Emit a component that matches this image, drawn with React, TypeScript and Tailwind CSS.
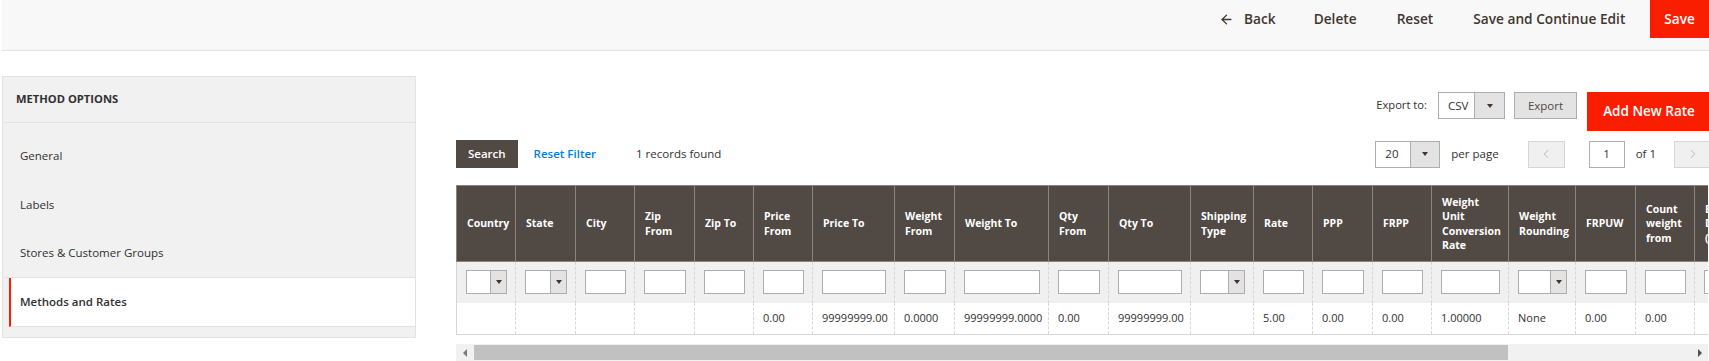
import { ArrowLeft, ChevronLeft, ChevronRight } from "lucide-react";

type Column = {
  label: string[];
  w: number;
  filter?: "select" | "text";
  value?: string;
};

const columns: Column[] = [
  { label: ["Country"], w: 59, filter: "select" },
  { label: ["State"], w: 60, filter: "select" },
  { label: ["City"], w: 59 },
  { label: ["Zip", "From"], w: 60 },
  { label: ["Zip To"], w: 59 },
  { label: ["Price", "From"], w: 59, value: "0.00" },
  { label: ["Price To"], w: 82, value: "99999999.00" },
  { label: ["Weight", "From"], w: 60, value: "0.0000" },
  { label: ["Weight To"], w: 94, value: "99999999.0000" },
  { label: ["Qty", "From"], w: 60, value: "0.00" },
  { label: ["Qty To"], w: 82, value: "99999999.00" },
  { label: ["Shipping", "Type"], w: 63, filter: "select" },
  { label: ["Rate"], w: 59, value: "5.00" },
  { label: ["PPP"], w: 60, value: "0.00" },
  { label: ["FRPP"], w: 59, value: "0.00" },
  { label: ["Weight", "Unit", "Conversion", "Rate"], w: 77, value: "1.00000" },
  { label: ["Weight", "Rounding"], w: 67, filter: "select", value: "None" },
  { label: ["FRPUW"], w: 60, value: "0.00" },
  { label: ["Count", "weight", "from"], w: 59, value: "0.00" },
  { label: ["Estimated", "Delivery", "(days)"], w: 80 },
];

const Caret = () => (
  <span className="w-0 h-0 border-x-[3.5px] border-x-transparent border-t-[4px] border-t-[#41362f]" />
);

const FakeSelect = ({ label = "", arrowW = "w-[16px]", className = "" }: { label?: string; arrowW?: string; className?: string }) => (
  <div className={`flex border border-[#adadad] bg-white ${className}`}>
    <div className="flex-1 flex items-center pl-[9px] text-[11.5px] text-[#303030]">{label}</div>
    <div className={`${arrowW} flex items-center justify-center bg-[#e3e3e3] border-l border-[#adadad]`}>
      <Caret />
    </div>
  </div>
);

const sideItems = ["General", "Labels", "Stores & Customer Groups"];

export default function App() {
  const tableWidth = columns.reduce((s, c) => s + c.w, 0);

  return (
    <div className="w-[1709px] h-[361px] overflow-hidden bg-white font-['Open_Sans',sans-serif] text-[#303030]">
      {/* page actions */}
      <div className="ml-[2px] h-[51px] bg-[#f8f8f8] border-b border-[#e3e3e3] flex justify-end items-start">
        <div className="flex items-center h-[38px] text-[13.7px] font-semibold text-[#41362f]">
          <ArrowLeft size={15} strokeWidth={2.2} className="mr-[10px]" />
          <span className="mr-[38px]">Back</span>
          <span className="mr-[40px]">Delete</span>
          <span className="mr-[40px]">Reset</span>
          <span className="mr-[25px]">Save and Continue Edit</span>
          <span className="h-[38px] flex items-center px-[14px] bg-[#fa1e00] text-white">Save</span>
        </div>
      </div>

      <div className="flex">
        {/* sidebar */}
        <aside className="ml-[2px] mt-[25px] w-[414px] shrink-0 self-start bg-[#f1f1f1] border border-[#e3e3e3] pb-[10px]">
          <div className="h-[46px] flex items-center pl-[13px] border-b border-[#e3e3e3] text-[11.2px] font-bold text-[#303030]">
            METHOD OPTIONS
          </div>
          <div className="pt-[8px]">
            {sideItems.map((item, i) => (
              <div
                key={item}
                className={`h-[49px] flex items-center pl-[17px] text-[11.5px] text-[#303030] ${
                  i === sideItems.length - 1 ? "border-b border-[#e3e3e3]" : ""
                }`}
              >
                {item}
              </div>
            ))}
            <div className="ml-[6px] h-[49px] flex items-center pl-[9px] bg-white border-l-2 border-l-[#fa1e00] border-b border-b-[#e3e3e3] text-[11.5px] font-semibold text-[#303030]">
              Methods and Rates
            </div>
          </div>
        </aside>

        {/* grid */}
        <main className="ml-[40px] mt-[41px] w-[1255px] shrink-0">
          <div className="flex justify-end items-start">
            <span className="h-[27px] flex items-center mr-[11px] text-[11.2px] text-[#303030]">Export to:</span>
            <FakeSelect label="CSV" arrowW="w-[30px]" className="w-[67px] h-[27px] mr-[9px]" />
            <button className="w-[63px] h-[27px] bg-[#e3e3e3] border border-[#adadad] text-[11.5px] text-[#514943] mr-[10px]">
              Export
            </button>
            <button className="w-[124px] h-[39px] bg-[#fa1e00] text-white text-[13.5px] font-semibold">Add New Rate</button>
          </div>

          <div className="mt-[9px] h-[28px] flex justify-between items-center">
            <div className="flex items-center">
              <button className="h-[28px] px-[12px] bg-[#514943] text-white text-[11.5px] font-semibold">Search</button>
              <span className="ml-[16px] text-[11.5px] font-semibold text-[#007bdb]">Reset Filter</span>
              <span className="ml-[40px] text-[11.5px] text-[#303030]">1 records found</span>
            </div>
            <div className="flex items-center">
              <FakeSelect label="20" arrowW="w-[29px]" className="w-[65px] h-[27px]" />
              <span className="ml-[11px] text-[11.5px] text-[#303030]">per page</span>
              <div className="ml-[29px] w-[37px] h-[27px] flex items-center justify-center bg-[#f0f0f0] border border-[#d6d6d6]">
                <ChevronLeft size={14} strokeWidth={1.5} className="text-[#adadad]" />
              </div>
              <div className="ml-[24px] w-[36px] h-[27px] flex items-center justify-center bg-white border border-[#adadad] text-[11.5px]">
                1
              </div>
              <span className="ml-[11px] text-[11.5px] text-[#303030]">of 1</span>
              <div className="ml-[18px] w-[37px] h-[27px] flex items-center justify-center bg-[#f0f0f0] border border-[#d6d6d6]">
                <ChevronRight size={14} strokeWidth={1.5} className="text-[#adadad]" />
              </div>
            </div>
          </div>

          <div className="mt-[17px] w-[1252px] overflow-hidden">
            <table className="table-fixed border-collapse" style={{ width: tableWidth }}>
              <colgroup>
                {columns.map((c, i) => (
                  <col key={i} style={{ width: c.w }} />
                ))}
              </colgroup>
              <thead>
                <tr className="h-[76px] bg-[#514943]">
                  {columns.map((c, i) => (
                    <th
                      key={i}
                      className="border border-[#8a837f] pl-[10px] text-left align-middle text-[10.5px] font-bold leading-[14.5px] text-white whitespace-nowrap"
                    >
                      {c.label.map((l, j) => (
                        <div key={j}>{l}</div>
                      ))}
                    </th>
                  ))}
                </tr>
              </thead>
              <tbody>
                <tr className="h-[41px] bg-[#f0f0f0]">
                  {columns.map((c, i) => (
                    <td
                      key={i}
                      className={`pl-[9px] pr-[8px] border-[#d6d6d6] ${
                        i === 0 ? "border-l border-solid" : "border-l border-dashed"
                      }`}
                    >
                      {c.filter === "select" ? (
                        <FakeSelect className="w-full h-[24px]" />
                      ) : (
                        <div className="w-full h-[24px] bg-white border border-[#adadad]" />
                      )}
                    </td>
                  ))}
                </tr>
                <tr className="h-[32px] bg-white border-b border-[#d6d6d6]">
                  {columns.map((c, i) => (
                    <td
                      key={i}
                      className={`pl-[9px] text-[11px] text-[#303030] whitespace-nowrap border-[#d6d6d6] ${
                        i === 0 ? "border-l border-solid" : "border-l border-dashed"
                      }`}
                    >
                      {c.value ?? ""}
                    </td>
                  ))}
                </tr>
              </tbody>
            </table>
          </div>

          {/* horizontal scrollbar */}
          <div className="mt-[9px] w-[1252px] h-[17px] bg-[#f1f1f1] flex items-center">
            <div className="w-[17px] h-full flex items-center justify-center">
              <span className="w-0 h-0 border-y-[4px] border-y-transparent border-r-[4px] border-r-[#7a7a7a]" />
            </div>
            <div className="ml-px w-[1034px] h-[15px] bg-[#c1c1c1]" />
            <div className="flex-1" />
            <div className="w-[17px] h-full flex items-center justify-center">
              <span className="w-0 h-0 border-y-[4px] border-y-transparent border-l-[4px] border-l-[#505050]" />
            </div>
          </div>
        </main>
      </div>
    </div>
  );
}
